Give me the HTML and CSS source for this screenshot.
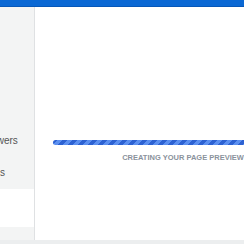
FILE: index.html
```html
<!DOCTYPE html>
<html lang="en">
<head>
    <meta charset="UTF-8">
    <meta name="viewport" content="width=device-width, initial-scale=1.0">
    <title>Creating preview</title>
    <link rel="stylesheet" href="styles.css">
</head>
<body>
    <div class="topbar"></div>

    <div class="layout">
        <aside class="sidebar">
            <ul class="side-nav">
                <li>Followers</li>
                <li>Emails</li>
            </ul>
            <div class="side-card"></div>
        </aside>

        <main class="main">
            <div class="loader">
                <div class="progress"></div>
                <p class="loader-text">Creating your page preview</p>
            </div>
        </main>
    </div>

    <div class="footer"></div>
</body>
</html>
```

FILE: styles.css
```css
body {
    margin: 0;
    padding: 0;
    overflow: hidden;
    font-family: "Liberation Sans", Arial, sans-serif;
    background: #fff;
    color: #555;
}

.topbar {
    height: 6px;
    background: #0a68d4;
    border-bottom: 1px solid #0657b8;
}

.layout {
    display: flex;
    height: 233px;
}

.sidebar {
    flex: 0 0 34px;
    background: #f3f4f4;
    border-right: 1px solid #dfe1e3;
    overflow: hidden;
    display: flex;
    flex-direction: column;
}

.side-nav {
    list-style: none;
    margin: 118px 0 0 -25px;
    padding: 0;
    font-size: 10px;
    color: #555;
    white-space: nowrap;
}

.side-nav li {
    height: 32px;
    line-height: 32px;
}

.side-card {
    height: 38px;
    margin-top: 0;
    background: #fff;
}

.main {
    flex: 0 0 296px;
    background: #fff;
}

.loader {
    padding: 133px 18px 0;
    text-align: center;
}

.progress {
    height: 5px;
    border-radius: 3px;
    background: repeating-linear-gradient(135deg, #2d62d2 0, #2d62d2 3.5px, #5b8ff0 3.5px, #5b8ff0 7.07px);
}

.loader-text {
    margin: 8px 0 0;
    font-size: 7.5px;
    font-weight: bold;
    text-transform: uppercase;
    color: #8a929c;
}

.footer {
    height: 4px;
    background: #eceeef;
}
```
